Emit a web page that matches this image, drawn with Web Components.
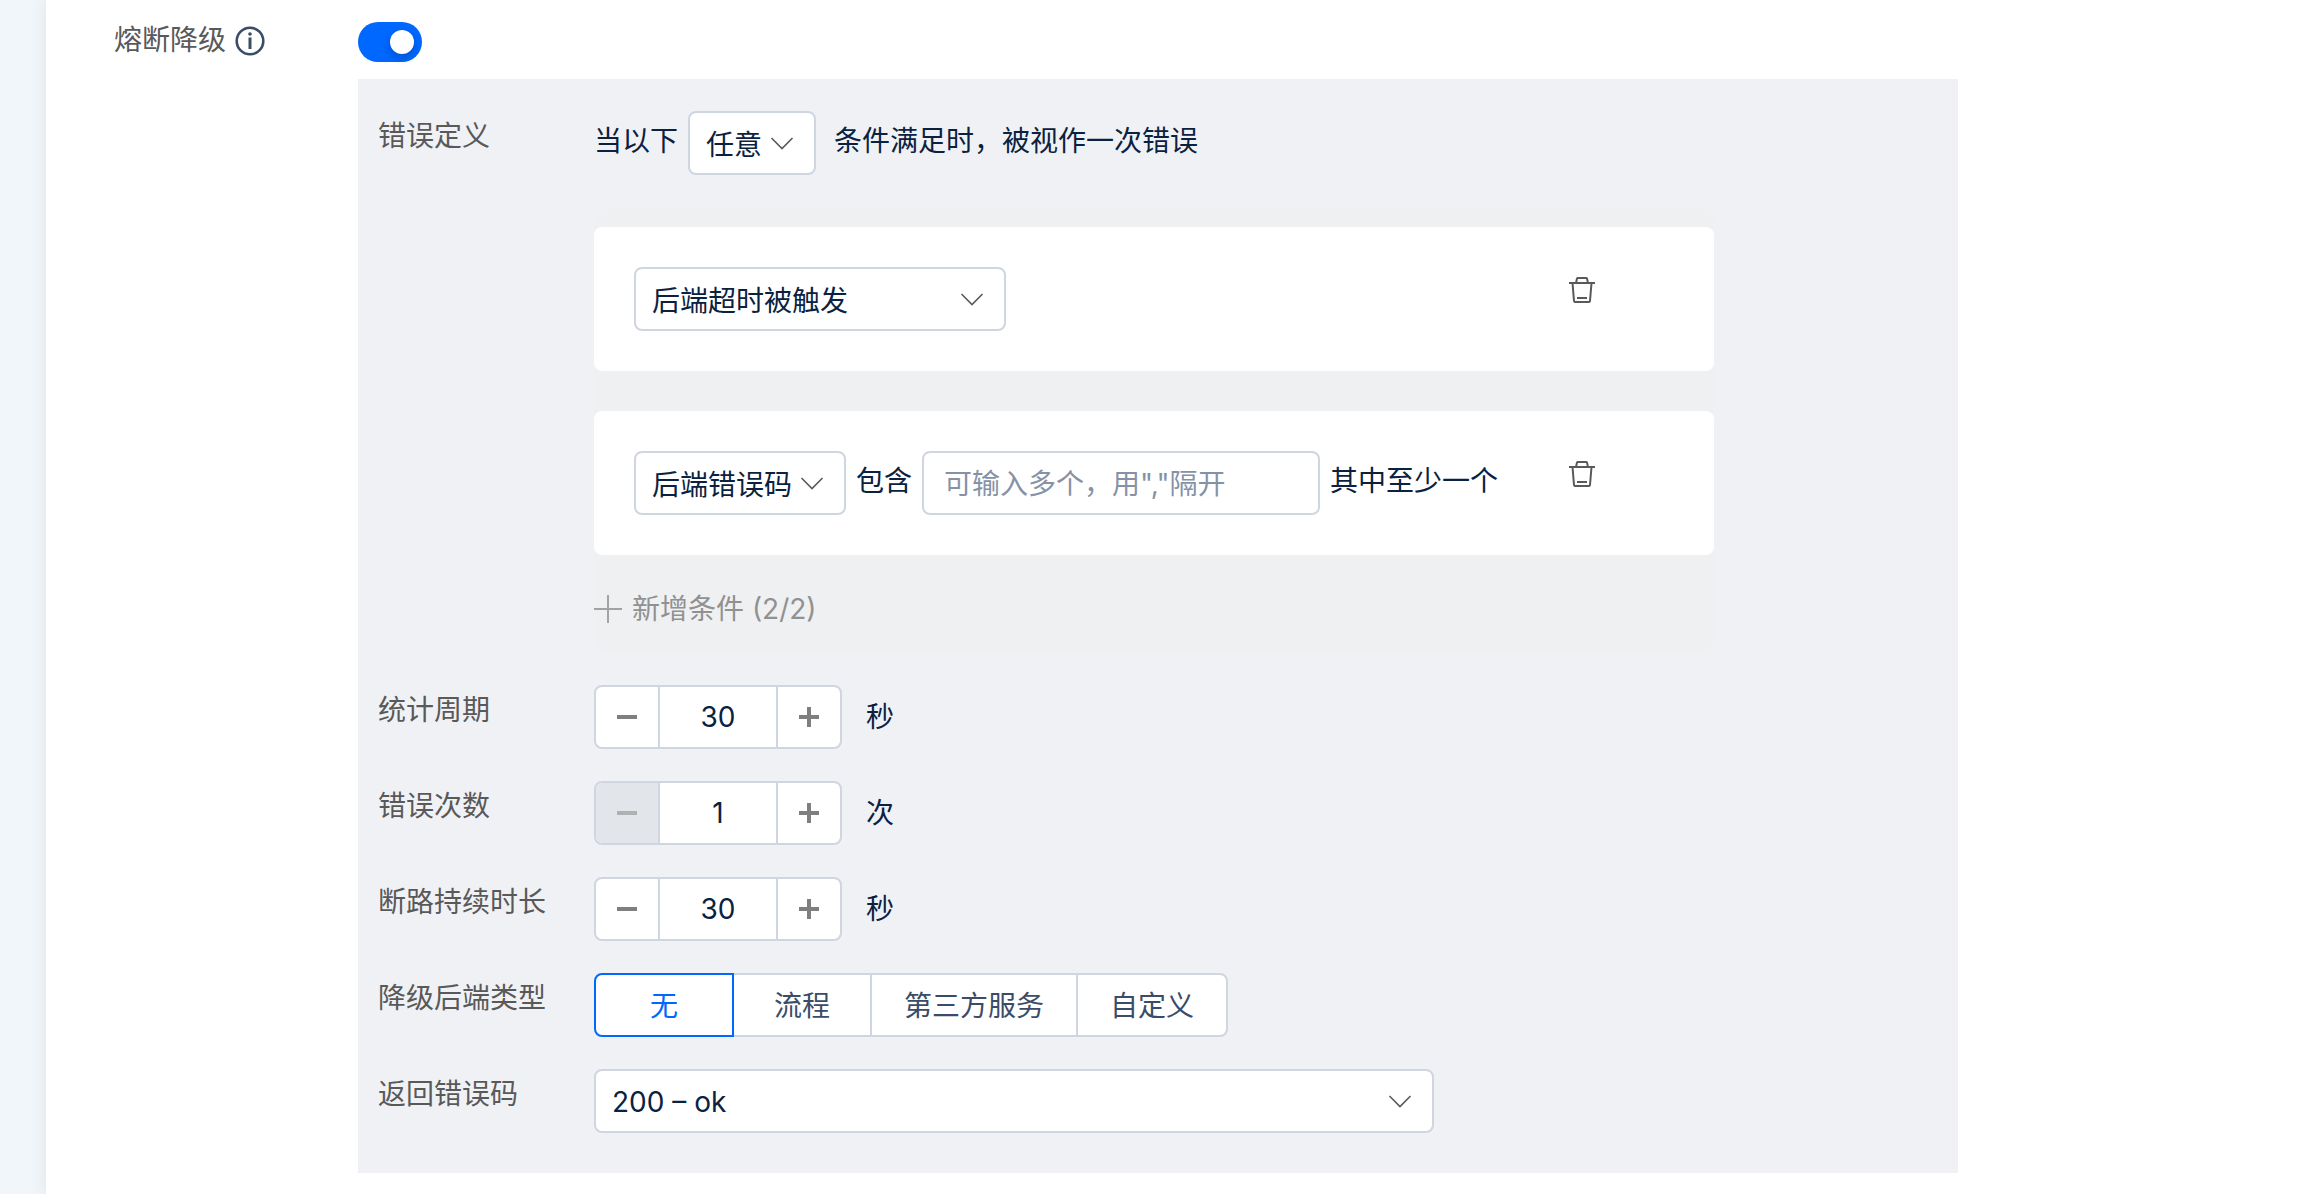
<!DOCTYPE html>
<html lang="zh-CN">
<head>
<meta charset="utf-8">
<meta name="viewport" content="width=device-width, initial-scale=1">
<title>熔断降级</title>
<style>
    body {
        margin: 0;
        background: #f1f6fa;
        color: #0a2240;
        font: 28px/40px Inter, "Noto Sans CJK SC", sans-serif;
    }
</style>
</head>
<body>
<breaker-settings></breaker-settings>

<script>
function createComponent({ elementName, template, styles, connected }) {
    customElements.define(elementName, class extends HTMLElement {
        static formAssociated = true;
        constructor() {
            super();
            this.attachShadow({ mode: 'open', delegatesFocus: true });
        }
        connectedCallback() {
            this.shadowRoot.innerHTML = `<style>* { box-sizing: border-box; } ${styles}</style>` + template(this);
            if (connected) connected(this, this.shadowRoot);
        }
    });
}

const attr = (el, name) => el.getAttribute(name) || '';

createComponent({
    elementName: 'ui-switch',
    styles: `
        :host { display: block; height: 40px; }
        input {
            appearance: none;
            display: flex;
            align-items: center;
            width: 64px;
            height: 40px;
            margin: 0;
            padding: 0 8px;
            border-radius: 20px;
            background: #c1c6cf;
            cursor: pointer;
        }
        input::before {
            content: "";
            width: 24px;
            height: 24px;
            border-radius: 50%;
            background: #fff;
            box-shadow: 0 4px 8px rgba(0, 0, 0, .2);
        }
        input:checked { justify-content: flex-end; background: #0067ff; }
    `,
    template: el => `<input type="checkbox" role="switch" aria-label="${attr(el, 'label')}" ${el.hasAttribute('checked') ? 'checked' : ''}>`,
});

createComponent({
    elementName: 'ui-select',
    styles: `
        :host { display: inline-grid; }
        select {
            appearance: none;
            grid-area: 1 / 1;
            width: 100%;
            height: 64px;
            margin: 0;
            padding: 2px 48px 0 16px;
            border: 2px solid #cfd6df;
            border-radius: 8px;
            background: #fff;
            color: inherit;
            font: inherit;
        }
        svg {
            grid-area: 1 / 1;
            place-self: center end;
            margin-right: 22px;
            pointer-events: none;
        }
    `,
    template: el => `
        <select aria-label="${attr(el, 'label')}">
            ${attr(el, 'options').split('|').map(o => `<option>${o}</option>`).join('')}
        </select>
        <svg width="24" height="14" viewBox="0 0 24 14" fill="none" stroke="#595959" stroke-width="1.6">
            <path d="M1.5 2 12 12.500 22.500 2"/>
        </svg>
    `,
});

createComponent({
    elementName: 'ui-input',
    styles: `
        :host { display: block; }
        input {
            width: 100%;
            height: 64px;
            padding: 2px 20px 0;
            border: 2px solid #cfd6df;
            border-radius: 8px;
            background: #fff;
            color: inherit;
            font: inherit;
        }
        input::placeholder { color: #8592a6; opacity: 1; }
    `,
    template: el => `<input type="text" aria-label="${attr(el, 'label')}" placeholder="${attr(el, 'placeholder').replace(/"/g, '&quot;')}">`,
});

createComponent({
    elementName: 'ui-stepper',
    styles: `
        :host { display: flex; align-items: center; gap: 24px; }
        .box {
            display: flex;
            height: 64px;
            border: 2px solid #cfd6df;
            border-radius: 8px;
            background: #fff;
            overflow: hidden;
        }
        button {
            display: grid;
            place-items: center;
            width: 62px;
            padding: 0;
            border: 0;
            background: none;
            color: #7f7f7f;
        }
        button:disabled { background: #e2e6eb; color: #b0b1b3; }
        input {
            appearance: textfield;
            width: 120px;
            padding: 0;
            border: solid #cfd6df;
            border-width: 0 2px;
            background: none;
            color: inherit;
            font: inherit;
            text-align: center;
        }
        input::-webkit-inner-spin-button { appearance: none; margin: 0; }
    `,
    template: el => `
        <div class="box">
            <button type="button" class="dec" aria-label="减少">
                <svg width="20" height="20" stroke="currentColor" stroke-width="4"><path d="M0 10h20"/></svg>
            </button>
            <input type="number" min="1" value="${attr(el, 'value')}" aria-label="${attr(el, 'label')}">
            <button type="button" class="inc" aria-label="增加">
                <svg width="20" height="20" stroke="currentColor" stroke-width="4"><path d="M0 10h20M10 0v20"/></svg>
            </button>
        </div>
        <slot></slot>
    `,
    connected(el, root) {
        const input = root.querySelector('input');
        const dec = root.querySelector('.dec');
        const sync = () => { dec.disabled = Number(input.value) <= 1; };
        dec.onclick = () => { input.stepDown(); sync(); };
        root.querySelector('.inc').onclick = () => { input.stepUp(); sync(); };
        input.oninput = sync;
        sync();
    },
});

createComponent({
    elementName: 'ui-segment',
    styles: `
        :host, .group { display: flex; }
        label {
            display: grid;
            place-items: center;
            min-width: 140px;
            height: 64px;
            padding: 2px 32px 0;
            border: 2px solid #cfd6df;
            background: #fff;
            color: #3b4c68;
            cursor: pointer;
        }
        label + label { margin-left: -2px; }
        label:first-child { border-radius: 8px 0 0 8px; }
        label:last-child { border-radius: 0 8px 8px 0; }
        label:has(:checked) { z-index: 1; border-color: #0067ff; color: #0067ff; }
        input, span { grid-area: 1 / 1; }
        input { appearance: none; width: 0; height: 0; margin: 0; }
    `,
    template: el => `
        <div class="group" role="radiogroup" aria-label="${attr(el, 'label')}">
            ${attr(el, 'options').split('|').map((o, i) => `<label><input type="radio" name="seg" ${i ? '' : 'checked'}><span>${o}</span></label>`).join('')}
        </div>
    `,
});

createComponent({
    elementName: 'form-row',
    styles: `
        :host { display: grid; grid-template-columns: 216px minmax(0, 1fr); }
        .label { color: #595959; line-height: 50px; }
    `,
    template: () => `
        <div class="label"><slot name="label"></slot></div>
        <div><slot></slot></div>
    `,
});

createComponent({
    elementName: 'condition-card',
    styles: `
        :host {
            display: flex;
            justify-content: space-between;
            padding: 40px;
            border-radius: 8px;
            background: #fff;
        }
        .fields { display: flex; gap: 10px; line-height: 60px; }
        .actions { width: 106px; }
        button {
            display: grid;
            place-items: center;
            width: 28px;
            height: 46px;
            padding: 0;
            border: 0;
            background: none;
            color: #595959;
        }
    `,
    template: () => `
        <div class="fields"><slot></slot></div>
        <div class="actions">
            <button type="button" aria-label="删除">
                <svg width="28" height="28" viewBox="0 0 28 28" fill="none" stroke="currentColor" stroke-width="2">
                    <path d="M1 7h26M8 7l1-4.500q.2-.5.8-.5h8.400q.6 0 .8.500L20 7M4.500 7l1.500 18q.1 1 1 1h14q.9 0 1-1L23.500 7M9 22h10"/>
                </svg>
            </button>
        </div>
    `,
});

createComponent({
    elementName: 'condition-list',
    styles: `
        :host {
            display: flex;
            flex-direction: column;
            gap: 40px;
            max-width: 1120px;
            padding: 20px 0 22px;
            border-radius: 16px;
            background: #eff0f2;
        }
        button {
            display: flex;
            align-items: center;
            align-self: flex-start;
            gap: 10px;
            margin-top: -8px;
            padding: 0;
            border: 0;
            background: none;
            color: #919191;
            font: inherit;
            line-height: 44px;
        }
    `,
    template: el => `
        <slot></slot>
        <button type="button" disabled>
            <svg width="28" height="28" stroke="#a3a3a3" stroke-width="2"><path d="M0 14h28M14 0v28"/></svg>
            <span>${attr(el, 'add')}</span>
        </button>
    `,
});

createComponent({
    elementName: 'breaker-settings',
    styles: `
        :host { display: block; padding-left: 46px; }
        main {
            display: grid;
            grid-template-columns: 244px minmax(0, 1600px);
            align-content: start;
            row-gap: 17px;
            min-height: 100vh;
            padding: 22px 68px;
            background: #fff;
            box-shadow: 0 0 16px rgba(54, 58, 80, .1);
        }
        .title {
            display: flex;
            align-items: center;
            gap: 9px;
            height: 38px;
            color: #595959;
            line-height: 36px;
        }
        .title label { align-self: flex-start; }
        .panel {
            grid-column: 2;
            display: flex;
            flex-direction: column;
            gap: 32px;
            padding: 32px 20px 40px;
            background: #f0f1f5;
        }
        .rule { display: flex; gap: 10px; line-height: 60px; margin-bottom: 32px; }
        .rule ui-select { width: 128px; margin-right: 8px; }
        .trigger { width: 372px; }
        .code { width: 212px; }
        .codes { width: 398px; }
        .status { display: grid; max-width: 840px; }
    `,
    template: () => `
        <main>
            <div class="title">
                <label for="enabled">熔断降级</label>
                <svg width="30" height="30" viewBox="0 0 30 30" fill="none" stroke="#3b4c68" stroke-width="2.6" role="img" aria-label="说明">
                    <circle cx="15" cy="15" r="13.300"/>
                    <path d="M15 11.500V23" stroke-width="3"/>
                    <circle cx="15" cy="8" r="1.800" fill="#3b4c68" stroke="none"/>
                </svg>
            </div>
            <ui-switch id="enabled" label="熔断降级" checked></ui-switch>
            <section class="panel">
                <form-row>
                    <label slot="label" for="match">错误定义</label>
                    <div class="rule">
                        <span>当以下</span>
                        <ui-select id="match" label="错误定义" options="任意|所有"></ui-select>
                        <span>条件满足时，被视作一次错误</span>
                    </div>
                    <condition-list add="新增条件 (2/2)">
                        <condition-card>
                            <ui-select class="trigger" label="条件" options="后端超时被触发|后端错误码"></ui-select>
                        </condition-card>
                        <condition-card>
                            <ui-select class="code" label="条件" options="后端错误码|后端超时被触发"></ui-select>
                            <label for="codes">包含</label>
                            <ui-input id="codes" class="codes" label="包含" placeholder='可输入多个，用","隔开'></ui-input>
                            <span>其中至少一个</span>
                        </condition-card>
                    </condition-list>
                </form-row>
                <form-row>
                    <label slot="label" for="period">统计周期</label>
                    <ui-stepper id="period" label="统计周期" value="30">秒</ui-stepper>
                </form-row>
                <form-row>
                    <label slot="label" for="count">错误次数</label>
                    <ui-stepper id="count" label="错误次数" value="1">次</ui-stepper>
                </form-row>
                <form-row>
                    <label slot="label" for="duration">断路持续时长</label>
                    <ui-stepper id="duration" label="断路持续时长" value="30">秒</ui-stepper>
                </form-row>
                <form-row>
                    <label slot="label" for="fallback">降级后端类型</label>
                    <ui-segment id="fallback" label="降级后端类型" options="无|流程|第三方服务|自定义"></ui-segment>
                </form-row>
                <form-row>
                    <label slot="label" for="status">返回错误码</label>
                    <ui-select id="status" class="status" label="返回错误码" options="200 – ok"></ui-select>
                </form-row>
            </section>
        </main>
    `,
});
</script>
</body>
</html>
